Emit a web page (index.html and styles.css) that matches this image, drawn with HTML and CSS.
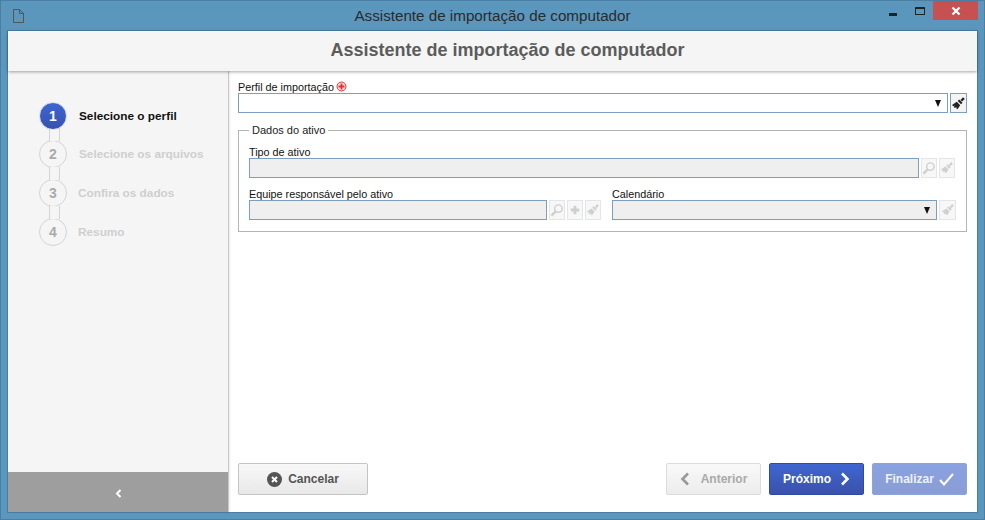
FILE: index.html
```html
<!DOCTYPE html>
<html lang="pt">
<head>
<meta charset="utf-8">
<title>Assistente de importação de computador</title>
<link rel="stylesheet" href="styles.css">
</head>
<body>
<div class="window">
  <div class="titlebar">
    <svg class="doc-icon" width="11" height="14" viewBox="0 0 11 14"><path d="M.5.5h6l4 4v9H.5zM6.500.5v4h4" fill="none" stroke="#555"/></svg>
    <div class="title">Assistente de importação de computador</div>
    <div class="controls">
      <span class="min"></span>
      <span class="max"></span>
      <span class="close"><svg width="10" height="10" viewBox="0 0 10 10"><path d="M1.500 1.500l7 7M8.500 1.500l-7 7" stroke="#fff" stroke-width="2.200"/></svg></span>
    </div>
  </div>
  <div class="client">
    <header class="head">Assistente de importação de computador</header>
    <div class="body">
      <aside class="side">
        <ol class="steps">
          <li class="step active"><span class="num">1</span><span class="lbl">Selecione o perfil</span></li>
          <li class="step"><span class="num">2</span><span class="lbl">Selecione os arquivos</span></li>
          <li class="step"><span class="num">3</span><span class="lbl nudge">Confira os dados</span></li>
          <li class="step"><span class="num">4</span><span class="lbl nudge">Resumo</span></li>
        </ol>
        <div class="collapse"><svg width="7" height="9" viewBox="0 0 7 9"><path d="M5.500 1L2 4.500 5.500 8" fill="none" stroke="#fff" stroke-width="2"/></svg></div>
      </aside>
      <main class="main">
        <div class="top">
          <div class="field">
            <label class="label">Perfil de importação<svg class="req" width="11" height="11" viewBox="0 0 11 11"><circle cx="5.500" cy="5.500" r="4.500" fill="#fbdcdc" stroke="#d8343a"/><path d="M5.500 2.500v6M2.500 5.500h6" stroke="#d8343a" stroke-width="1.800"/></svg></label>
            <div class="row">
              <div class="input select"><i class="arrow"></i></div>
              <button class="tool on"><svg viewBox="0 0 15 15"><use href="#brush"/></svg></button>
            </div>
          </div>
          <fieldset class="group">
            <legend>Dados do ativo</legend>
            <div class="field">
              <label class="label">Tipo de ativo</label>
              <div class="row">
                <div class="input off"></div>
                <button class="tool"><svg viewBox="0 0 15 15"><use href="#lens"/></svg></button>
                <button class="tool"><svg viewBox="0 0 15 15"><use href="#brush"/></svg></button>
              </div>
            </div>
            <div class="pair">
              <div class="field team">
                <label class="label">Equipe responsável pelo ativo</label>
                <div class="row">
                  <div class="input off"></div>
                  <button class="tool"><svg viewBox="0 0 15 15"><use href="#lens"/></svg></button>
                  <button class="tool"><svg viewBox="0 0 15 15"><use href="#plus"/></svg></button>
                  <button class="tool"><svg viewBox="0 0 15 15"><use href="#brush"/></svg></button>
                </div>
              </div>
              <div class="field cal">
                <label class="label">Calendário</label>
                <div class="row">
                  <div class="input off select"><i class="arrow"></i></div>
                  <button class="tool bare"><svg viewBox="0 0 15 15"><use href="#brush"/></svg></button>
                </div>
              </div>
            </div>
          </fieldset>
        </div>
        <div class="actions">
          <button class="btn cancel"><svg width="15" height="15" viewBox="0 0 15 15"><circle cx="7.500" cy="7.500" r="7.500" fill="#555"/><path d="M5 5l5 5M10 5l-5 5" stroke="#fff" stroke-width="2"/></svg>Cancelar</button>
          <div class="nav">
            <button class="btn prev"><svg width="10" height="14" viewBox="0 0 10 14"><path d="M8 1.500L2.500 7 8 12.500" fill="none" stroke="#999" stroke-width="2.600"/></svg>Anterior</button>
            <button class="btn next">Próximo<svg width="10" height="14" viewBox="0 0 10 14"><path d="M2 1.500L7.500 7 2 12.500" fill="none" stroke="#fff" stroke-width="2.600"/></svg></button>
            <button class="btn finish">Finalizar<svg width="15" height="13" viewBox="0 0 15 13"><path d="M1 7l4 4.500L14 1" fill="none" stroke="#fff" stroke-width="2"/></svg></button>
          </div>
        </div>
      </main>
    </div>
  </div>
</div>
<svg class="defs" width="0" height="0">
  <defs>
    <g id="brush"><path d="M9.500 4L12 1.200 13.800 3 11 5.500z" fill="currentColor"/><path d="M8.200 3.500l3.300 3.300-1.500 1.500-3.300-3.300z" fill="currentColor"/><path d="M5.800 5.800l3.400 3.400-2.700 4-1.300-1 .3-1.500-1.500 1.300-1.300-1 1.200-1.500-1.600.8L1 9z" fill="currentColor"/></g>
    <g id="lens"><circle cx="9" cy="6" r="4" fill="none" stroke="currentColor" stroke-width="1.500"/><path d="M6 9l-4.500 4.500" stroke="currentColor" stroke-width="2.400"/></g>
    <g id="plus"><path d="M7.500 3v9M3 7.500h9" stroke="currentColor" stroke-width="3"/></g>
  </defs>
</svg>
</body>
</html>
```
FILE: styles.css
```css
* { box-sizing: border-box; }
html, body { margin: 0; height: 100%; }
body { font-family: "Liberation Sans", Arial, sans-serif; font-size: 12px; color: #111; overflow: hidden; }
button { font-family: inherit; padding: 0; margin: 0; cursor: default; }
.defs { position: absolute; }

.window { width: 985px; height: 520px; background: #5b97bd; border: 1px solid #4a7ea3; padding: 0 6px 6px; display: flex; flex-direction: column; }
.titlebar { height: 29px; flex: none; display: flex; align-items: center; position: relative; padding-left: 6px; }
.doc-icon { flex: none; margin-top: 1px; }
.title { position: absolute; left: -6px; right: -6px; text-align: center; font-size: 15.200px; color: #2b2b2b; top: 6px; }
.controls { position: absolute; right: 0; top: 0; height: 20px; display: flex; align-items: flex-start; }
.min { width: 8px; height: 3px; background: #222; margin-top: 12px; margin-right: 18px; }
.max { width: 10px; height: 8px; border: 1px solid #222; border-top-width: 2px; margin-top: 6px; }
.close { width: 45px; height: 19px; background: #c75050; margin-left: 8px; display: flex; align-items: center; justify-content: center; }
.close svg { display: block; }

.client { flex: 1; display: flex; flex-direction: column; background: #fff; min-height: 0; border: 1px solid #4a7ea3; }
.head { height: 40px; flex: none; background: #f5f5f5; text-align: center; padding-left: 30px; font-size: 18px; font-weight: bold; color: #5c5c5c; line-height: 38px; box-shadow: 0 1px 3px rgba(0,0,0,.35); position: relative; z-index: 1; }
.body { flex: 1; display: flex; min-height: 0; }

.side { width: 221px; flex: none; background: #f5f5f5; border-right: 1px solid #c8c8c8; display: flex; flex-direction: column; justify-content: space-between; box-shadow: 1px 0 2px rgba(0,0,0,.08); }
.steps { list-style: none; margin: 0; padding: 27px 0 0 31px; }
.step { display: flex; align-items: center; height: 39px; position: relative; }
.step.active { height: 36px; }
.step + .step::before { content: ""; position: absolute; left: 10px; top: -6px; width: 9px; height: 13px; background: #f5f5f5; border-left: 1px solid #d4d4d4; border-right: 1px solid #d4d4d4; z-index: 2; }
.num { width: 28px; height: 28px; border-radius: 50%; flex: none; border: 1px solid #d4d4d4; background: #f5f5f5; color: #aaa; font-weight: bold; font-size: 14px; text-align: center; line-height: 26px; position: relative; z-index: 1; }
.lbl { margin-left: 12px; font-weight: bold; color: #cfcfcf; font-size: 11.800px; }
.lbl.nudge { margin-left: 11px; }
.active .num { background: linear-gradient(#3f65d2, #3652ad); border-color: #d7dcf0; color: #fff; z-index: 3; }
.active .lbl { color: #111; }
.collapse { height: 40px; background: #9e9e9e; display: flex; align-items: center; justify-content: center; padding-top: 2px; }

.main { flex: 1; display: flex; flex-direction: column; justify-content: space-between; padding: 10px 10px 17px 9px; min-width: 0; }
.label { display: block; height: 12px; line-height: 12px; font-size: 10.800px; white-space: nowrap; color: #111; }
.req { vertical-align: -1px; margin-left: 2px; }
.row { display: flex; gap: 2px; align-items: stretch; height: 20px; }
.input { flex: 1; min-width: 0; border: 1px solid #7d9fbd; background: #fff; position: relative; }
.input.off { background: #efefef; }
.arrow { position: absolute; right: 6px; top: 6px; width: 0; height: 0; border-left: 3.500px solid transparent; border-right: 3.500px solid transparent; border-top: 7px solid #111; }
.tool { width: 16px; flex: none; background: #f7f7f7; border: 1px solid #e2e6ea; color: #cfcfcf; display: flex; align-items: center; justify-content: center; }
.tool svg { display: block; width: 14px; height: 14px; flex: none; }
.tool.bare { width: 17px; }
.tool.on { width: 17px; border-color: #7d9fbd; color: #222; background: #f4f4f4; }
.tool.on svg { width: 15px; height: 15px; }

.group { margin: 10px 0 0; padding: 9px 11px 11px 10px; border: 1px solid #b4b4b4; min-width: 0; height: 109px; }
.group legend { font-size: 11px; padding: 0 3px; margin-left: 0; line-height: 14px; color: #222; }
.pair { display: grid; grid-template-columns: 352px 344px; column-gap: 11px; margin-top: 10px; }

.actions { display: flex; justify-content: space-between; }
.nav { display: flex; gap: 8px; }
.btn { height: 32px; border-radius: 2px; display: flex; align-items: center; justify-content: center; gap: 6px; font-weight: bold; font-size: 12px; }
.btn svg { flex: none; display: block; }
.cancel { width: 130px; border: 1px solid #c4c4c4; background: linear-gradient(#f8f8f8, #e8e8e8); color: #555; }
.prev { width: 95px; border: 1px solid #dcdcdc; background: linear-gradient(#f9f9f9, #ececec); color: #aaa; gap: 11px; }
.next { width: 95px; border: 1px solid #2f4aa3; background: linear-gradient(#3f65d2, #3a52aa); color: #fff; gap: 9px; }
.finish { width: 95px; border: 1px solid #8ea3dc; background: linear-gradient(#8aa2e2, #8a9dd4); color: #eef1fb; gap: 5px; }
```
